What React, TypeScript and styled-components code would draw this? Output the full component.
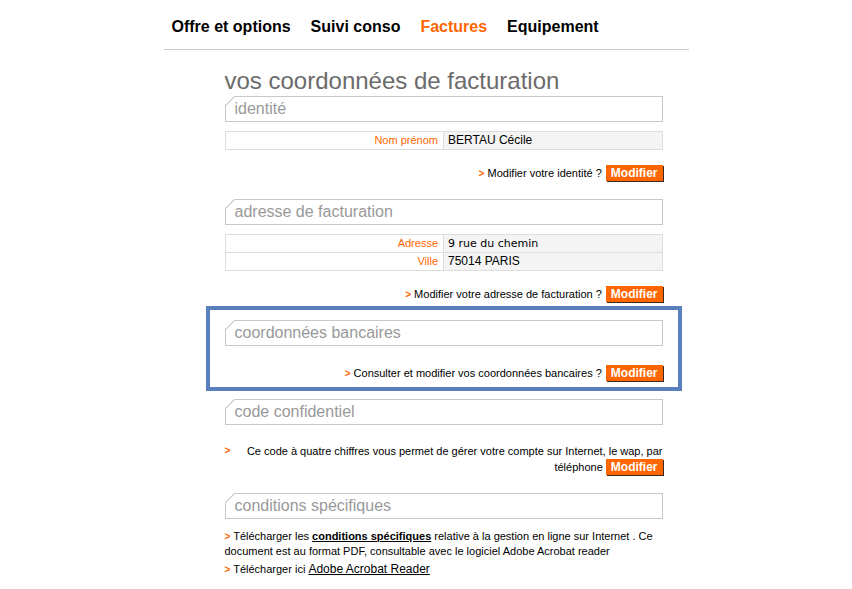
import styled, { createGlobalStyle } from "styled-components";

const GlobalStyle = createGlobalStyle`
  body {
    margin: 0;
    background: #fff;
    font-family: "Liberation Sans", Arial, sans-serif;
    color: #000;
  }
`;

const Page = styled.div`
  width: 525px;
  margin: 0 auto;
`;

const Nav = styled.nav`
  display: flex;
  gap: 20px;
  padding: 18px 0 13px 8px;
  border-bottom: 1px solid #cccccc;
`;

const NavItem = styled.a<{ $active?: boolean }>`
  font-size: 16px;
  line-height: 18px;
  font-weight: bold;
  color: ${(p) => (p.$active ? "#ff6600" : "#000")};
  text-decoration: none;
`;

const Content = styled.div`
  width: 438px;
  margin-left: 61px;
  padding-bottom: 20px;
`;

const Title = styled.h1`
  margin: 17px 0 0;
  font-size: 24px;
  line-height: 28px;
  font-weight: normal;
  color: #6b6b6b;
`;

const SectionHeader = styled.h2<{ $top?: number }>`
  position: relative;
  box-sizing: border-box;
  height: 26px;
  margin: ${(p) => p.$top ?? 0}px 0 0;
  padding: 0 0 0 9px;
  border: 1px solid #c8c8c8;
  font-size: 16px;
  line-height: 24px;
  font-weight: normal;
  color: #999;

  &::before {
    content: "";
    position: absolute;
    top: -1px;
    left: -1px;
    width: 10px;
    height: 10px;
    background: linear-gradient(
      to bottom right,
      #fff calc(50% - 0.8px),
      #c8c8c8 calc(50% - 0.5px),
      #c8c8c8 calc(50% + 0.5px),
      transparent calc(50% + 0.8px)
    );
  }
`;

const InfoTable = styled.table`
  width: 100%;
  margin-top: 9px;
  border-collapse: collapse;
  border: 1px solid #dddddd;
`;

const Label = styled.td`
  width: 50%;
  padding: 0 5px 0 0;
  border: 1px solid #dddddd;
  text-align: right;
  font-size: 11px;
  line-height: 17px;
  color: #ff6600;
  background: #fff;
`;

const Value = styled.td<{ $alt?: boolean }>`
  padding: 0 0 0 4px;
  border: 1px solid #dddddd;
  background: #f4f4f4;
  font-family: ${(p) =>
    p.$alt ? `"DejaVu Sans", Verdana, sans-serif` : `"Liberation Sans", Arial, sans-serif`};
  font-size: ${(p) => (p.$alt ? 11 : 12)}px;
  line-height: 17px;
`;

const ActionLine = styled.div<{ $top?: number }>`
  display: flex;
  justify-content: flex-end;
  align-items: center;
  gap: 4px;
  height: 16px;
  margin-top: ${(p) => p.$top ?? 15}px;
  font-size: 11px;
`;

const Arrow = styled.span`
  color: #ff6600;
  font-size: 10px;
  font-weight: bold;
`;

const Button = styled.button`
  height: 16px;
  padding: 0 5px;
  border: 0;
  background: #ff6600;
  color: #fff;
  font-family: "Liberation Sans", Arial, sans-serif;
  font-size: 12px;
  font-weight: bold;
  line-height: 16px;
  box-shadow: 1px 1px 0 #3a2a20;
  cursor: pointer;
  vertical-align: bottom;
`;

const Highlight = styled.section`
  margin: 4px -19px 0;
  padding: 10px 15px 6px;
  border: 4px solid #5a7fbd;
`;

const CodeBlock = styled.div`
  display: flex;
  margin-top: 18px;
  font-size: 11px;
  line-height: 16px;
`;

const CodeArrow = styled.div`
  width: 18px;
  flex: none;
  color: #ff6600;
  font-size: 10px;
  font-weight: bold;
`;

const CodeText = styled.div`
  flex: 1;
  text-align: right;
`;

const Para = styled.p<{ $top: number }>`
  margin: ${(p) => p.$top}px 0 0;
  font-size: 11px;
  line-height: 14px;
`;

const StrongLink = styled.a`
  font-weight: bold;
  color: #000;
  text-decoration: underline;
`;

const Link = styled.a`
  font-size: 12px;
  color: #000;
  text-decoration: underline;
`;

export default function App() {
  return (
    <>
      <GlobalStyle />
      <Page>
        <Nav>
          <NavItem>Offre et options</NavItem>
          <NavItem>Suivi conso</NavItem>
          <NavItem $active>Factures</NavItem>
          <NavItem>Equipement</NavItem>
        </Nav>
        <Content>
          <Title>vos coordonnées de facturation</Title>

          <SectionHeader $top={1}>identité</SectionHeader>
          <InfoTable>
            <tbody>
              <tr>
                <Label>Nom prénom</Label>
                <Value>BERTAU Cécile</Value>
              </tr>
            </tbody>
          </InfoTable>
          <ActionLine>
            <span>
              <Arrow>&gt;</Arrow> Modifier votre identité ?
            </span>
            <Button>Modifier</Button>
          </ActionLine>

          <SectionHeader $top={18}>adresse de facturation</SectionHeader>
          <InfoTable>
            <tbody>
              <tr>
                <Label>Adresse</Label>
                <Value $alt>9 rue du chemin</Value>
              </tr>
              <tr>
                <Label>Ville</Label>
                <Value>75014 PARIS</Value>
              </tr>
            </tbody>
          </InfoTable>
          <ActionLine>
            <span>
              <Arrow>&gt;</Arrow> Modifier votre adresse de facturation ?
            </span>
            <Button>Modifier</Button>
          </ActionLine>

          <Highlight>
            <SectionHeader>coordonnées bancaires</SectionHeader>
            <ActionLine $top={19}>
              <span>
                <Arrow>&gt;</Arrow> Consulter et modifier vos coordonnées bancaires ?
              </span>
              <Button>Modifier</Button>
            </ActionLine>
          </Highlight>

          <SectionHeader $top={8}>code confidentiel</SectionHeader>
          <CodeBlock>
            <CodeArrow>&gt;</CodeArrow>
            <CodeText>
              Ce code à quatre chiffres vous permet de gérer votre compte sur Internet, le wap, par
              téléphone <Button>Modifier</Button>
            </CodeText>
          </CodeBlock>

          <SectionHeader $top={18}>conditions spécifiques</SectionHeader>
          <Para $top={10}>
            <Arrow>&gt;</Arrow> Télécharger les <StrongLink>conditions spécifiques</StrongLink>{" "}
            relative à la gestion en ligne sur Internet . Ce document est au format PDF,
            consultable avec le logiciel Adobe Acrobat reader
          </Para>
          <Para $top={4}>
            <Arrow>&gt;</Arrow> Télécharger ici <Link>Adobe Acrobat Reader</Link>
          </Para>
        </Content>
      </Page>
    </>
  );
}
